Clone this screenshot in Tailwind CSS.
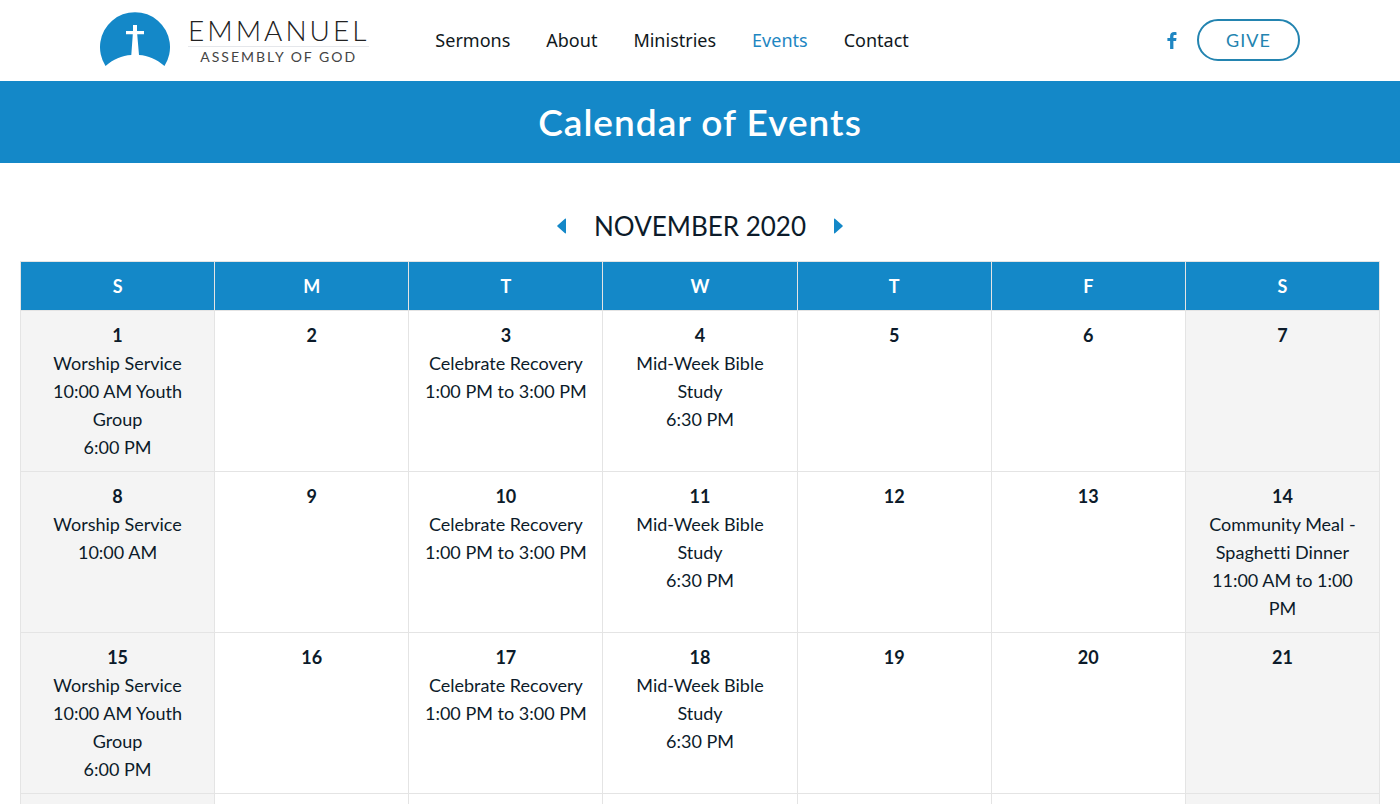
<!DOCTYPE html>
<html lang="en">

<head>
    <meta charset="UTF-8">
    <meta name="viewport" content="width=device-width, initial-scale=1.0">
    <title>Calendar of Events | Emmanuel Assembly of God</title>
    <script src="https://cdn.jsdelivr.net/npm/@tailwindcss/browser@4"></script>
</head>

<body class="bg-white font-['Lato',sans-serif] text-lg leading-7 text-[#0c1b2a] [font-variant-ligatures:none]">
    <header class="border-b border-white px-5">
        <div class="mx-auto flex h-20 max-w-[1200px] items-center">
            <a href="#" class="flex items-center" aria-label="Emmanuel Assembly of God">
                <svg class="h-14 w-[70px]" viewBox="0 0 70 56" fill="none" aria-hidden="true">
                    <path d="M5.500 54A35 35 0 1 1 64.500 54C57 47.500 48 43.500 39 43L37.200 22.300H44V19H37V13H33V19H26V22.300H32.800L31.300 43C22 43.500 13 47.500 5.500 54Z" fill="#1488c8" />
                </svg>
                <span class="ml-[18px] flex flex-col items-center text-[#222]">
                    <span class="border-b border-gray-200 text-[28px] leading-8 font-light tracking-[3px]">EMMANUEL</span>
                    <span class="text-sm leading-5 tracking-[2px] text-[#444]">ASSEMBLY OF GOD</span>
                </span>
            </a>
            <nav class="ml-[66px] flex gap-9 font-['Noto_Sans',sans-serif] text-[#101820]">
                <a href="#">Sermons</a>
                <a href="#">About</a>
                <a href="#">Ministries</a>
                <a href="#" class="text-[#1e86c2]">Events</a>
                <a href="#">Contact</a>
            </nav>
            <div class="ml-auto flex items-center gap-5">
                <a href="#" aria-label="Facebook" class="text-[#1e86c2]">
                    <svg class="h-[17px] w-[10px]" viewBox="0 0 10 17" fill="currentColor" aria-hidden="true">
                        <path d="M9.500.2V3H7.800C6.600 3 6.400 3.600 6.400 4.400V6H9.500L9.100 9H6.400V17H3.100V9H.4V6H3.100V3.900C3.100 1.400 4.700 0 7.100 0C8.200 0 9.200.1 9.500.2Z" />
                    </svg>
                </a>
                <a href="#" class="flex h-[42px] w-[103px] items-center justify-center rounded-full border-2 border-[#2384b0] tracking-[1px] text-[#2384b0]">GIVE</a>
            </div>
        </div>
    </header>

    <section class="bg-[#1488c8] py-[21px] text-center text-white">
        <h1 class="text-[37px] leading-10 font-semibold tracking-[1px]">Calendar of Events</h1>
    </section>

    <main class="px-5 pt-[43px]">
        <div class="mb-[15px] flex items-center justify-center gap-7">
            <button type="button" aria-label="Previous month" class="text-[#1488c8]">
                <svg class="h-4 w-[9px]" viewBox="0 0 9 16" fill="currentColor" aria-hidden="true">
                    <path d="M8 .8C8.500.3 9 .6 9 1.200V14.800C9 15.400 8.500 15.700 8 15.200L.4 8.500C.1 8.200.1 7.800.4 7.500Z" />
                </svg>
            </button>
            <h2 class="text-[26px] leading-10">NOVEMBER 2020</h2>
            <button type="button" aria-label="Next month" class="text-[#1488c8]">
                <svg class="h-4 w-[9px]" viewBox="0 0 9 16" fill="currentColor" aria-hidden="true">
                    <path d="M1 .8C.5.3 0 .6 0 1.200V14.800C0 15.400.5 15.700 1 15.200L8.600 8.500C8.900 8.200 8.900 7.800 8.600 7.500Z" />
                </svg>
            </button>
        </div>

        <table class="w-full table-fixed border-collapse text-center [&_td]:border [&_td]:border-[#e4e4e4] [&_td]:p-[10px] [&_td]:align-top [&_th]:border [&_th]:border-[#e4e4e4] [&_th]:p-[10px]">
            <thead class="bg-[#1488c8] text-white">
                <tr>
                    <th scope="col">S</th>
                    <th scope="col">M</th>
                    <th scope="col">T</th>
                    <th scope="col">W</th>
                    <th scope="col">T</th>
                    <th scope="col">F</th>
                    <th scope="col">S</th>
                </tr>
            </thead>
            <tbody>
                <tr>
                    <td class="bg-[#f4f4f4]"><strong>1</strong><br>Worship Service<br>10:00 AM Youth<br>Group<br>6:00 PM</td>
                    <td><strong>2</strong></td>
                    <td><strong>3</strong><br>Celebrate Recovery<br>1:00 PM to 3:00 PM</td>
                    <td><strong>4</strong><br>Mid-Week Bible<br>Study<br>6:30 PM</td>
                    <td><strong>5</strong></td>
                    <td><strong>6</strong></td>
                    <td class="bg-[#f4f4f4]"><strong>7</strong></td>
                </tr>
                <tr>
                    <td class="bg-[#f4f4f4]"><strong>8</strong><br>Worship Service<br>10:00 AM</td>
                    <td><strong>9</strong></td>
                    <td><strong>10</strong><br>Celebrate Recovery<br>1:00 PM to 3:00 PM</td>
                    <td><strong>11</strong><br>Mid-Week Bible<br>Study<br>6:30 PM</td>
                    <td><strong>12</strong></td>
                    <td><strong>13</strong></td>
                    <td class="bg-[#f4f4f4]"><strong>14</strong><br>Community Meal -<br>Spaghetti Dinner<br>11:00 AM to 1:00<br>PM</td>
                </tr>
                <tr>
                    <td class="bg-[#f4f4f4]"><strong>15</strong><br>Worship Service<br>10:00 AM Youth<br>Group<br>6:00 PM</td>
                    <td><strong>16</strong></td>
                    <td><strong>17</strong><br>Celebrate Recovery<br>1:00 PM to 3:00 PM</td>
                    <td><strong>18</strong><br>Mid-Week Bible<br>Study<br>6:30 PM</td>
                    <td><strong>19</strong></td>
                    <td><strong>20</strong></td>
                    <td class="bg-[#f4f4f4]"><strong>21</strong></td>
                </tr>
                <tr>
                    <td class="bg-[#f4f4f4]"></td>
                    <td></td>
                    <td></td>
                    <td></td>
                    <td></td>
                    <td></td>
                    <td class="bg-[#f4f4f4]"></td>
                </tr>
            </tbody>
        </table>
    </main>
</body>

</html>
